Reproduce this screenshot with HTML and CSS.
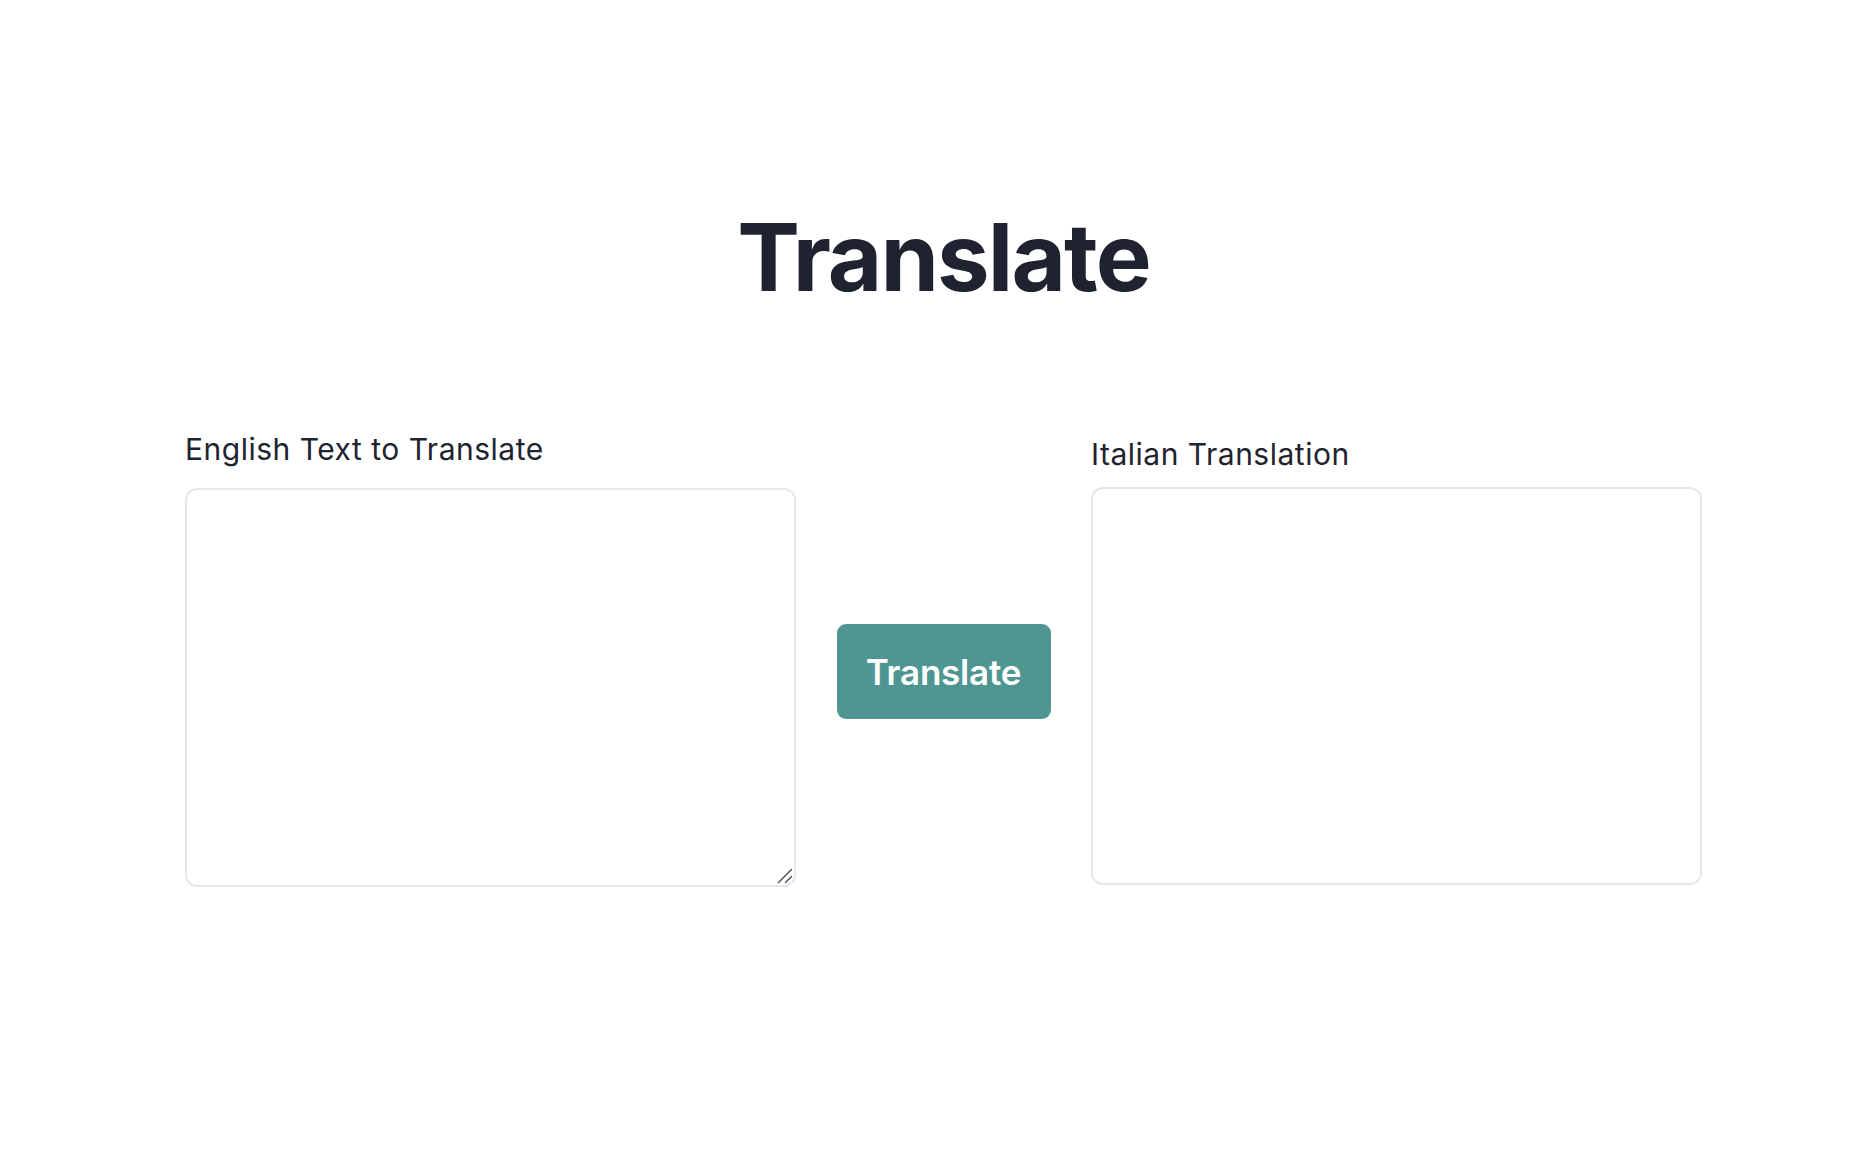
FILE: index.html
```html
<!DOCTYPE html>
<html lang="en">
<head>
<meta charset="utf-8">
<title>Translate</title>
<link rel="stylesheet" href="styles.css">
</head>
<body>
<main class="page">
  <h1 class="title">Translate</h1>
  <div class="row">
    <div class="col col-left">
      <label class="label label-left" for="src">English Text to Translate</label>
      <div class="box-wrap">
        <textarea id="src" class="box box-src"></textarea>
        <svg class="grip" width="16" height="16" viewBox="0 0 16 16" aria-hidden="true">
          <line x1="1.5" y1="14.5" x2="14.5" y2="1.5" />
          <line x1="8.5" y1="14.5" x2="14.5" y2="8.5" />
        </svg>
      </div>
    </div>
    <div class="mid">
      <button class="btn" type="button">Translate</button>
    </div>
    <div class="col col-right">
      <label class="label label-right" for="dst">Italian Translation</label>
      <textarea id="dst" class="box box-dst" readonly></textarea>
    </div>
  </div>
</main>
</body>
</html>
```
FILE: styles.css
```css
* { box-sizing: border-box; }
html, body { margin: 0; padding: 0; background: #ffffff; }
body {
  font-family: Inter, "Noto Sans", "Liberation Sans", sans-serif;
  color: #1f2330;
}
.page {
  width: 1517px;
  margin-left: 185px;
  padding-top: 200px;
}
.title {
  margin: 0;
  text-align: center;
  font-size: 94px;
  line-height: 114px;
  font-weight: 700;
  letter-spacing: -1.9px;
  color: #1f2330;
}
.row {
  display: flex;
  align-items: flex-start;
  margin-top: 117px;
}
.col {
  display: flex;
  flex-direction: column;
  width: 611px;
}
.label {
  font-size: 30px;
  line-height: 36px;
  font-weight: 400;
  letter-spacing: 0.5px;
  color: #1f2330;
}
.label-left { margin-bottom: 21px; }
.label-right { margin-top: 5px; margin-bottom: 15px; }
.box-wrap {
  position: relative;
  width: 611px;
  height: 399px;
}
.box {
  display: block;
  width: 611px;
  height: 399px;
  border: 2px solid #e4e7ec;
  border-radius: 12px;
  background: #ffffff;
  font-family: inherit;
  font-size: 24px;
  padding: 12px;
  outline: none;
  resize: none;
}
.box-dst { height: 398px; }
.grip {
  position: absolute;
  right: 3px;
  bottom: 3px;
  pointer-events: none;
  stroke: #555a60;
  stroke-width: 1.6;
  stroke-linecap: round;
}
.mid {
  flex: 1;
  display: flex;
  justify-content: center;
  padding-top: 193px;
}
.btn {
  width: 214px;
  height: 95px;
  border: none;
  border-radius: 9px;
  background: #4f9692;
  color: #ffffff;
  font-family: inherit;
  font-size: 35px;
  font-weight: 600;
  letter-spacing: -0.2px;
  padding: 0;
  cursor: pointer;
}
```
